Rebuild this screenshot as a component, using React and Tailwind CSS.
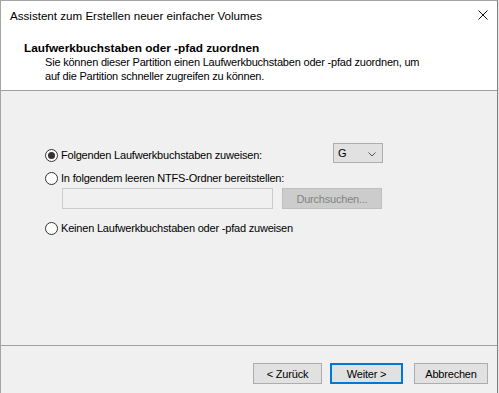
import React from "react";

function Radio({ checked, className = "" }) {
  return (
    <div className={"w-[13px] h-[13px] rounded-full border border-[#333333] bg-white flex items-center justify-center shrink-0 " + className}>
      {checked && <div className="w-[7px] h-[7px] rounded-full bg-[#333333]" />}
    </div>
  );
}

function Btn({ children, className = "", def = false }) {
  return (
    <div
      className={
        "h-[21px] flex items-center justify-center bg-[#e1e1e1] " +
        (def ? "border-2 border-[#0078d7] " : "border border-[#adadad] ") +
        className
      }
    >
      {children}
    </div>
  );
}

export default function App() {
  return (
    <div className="w-[499px] h-[393px] flex bg-white text-black text-[11px] tracking-[-0.2px] leading-[14px] font-['Liberation_Sans',Arial,sans-serif] overflow-hidden">
      <div className="w-[498px] h-[393px] flex flex-col border-l border-t border-[#a5a5a5] border-r border-r-[#808080]">
        {/* title bar */}
        <div className="h-[30px] flex items-start justify-between pl-[9px] pt-[8px] bg-white shrink-0">
          <span className="text-[11.6px] tracking-normal">Assistent zum Erstellen neuer einfacher Volumes</span>
          <svg width="10" height="10" viewBox="0 0 10 10" className="mt-[1px] mr-[9px]">
            <path d="M0.5 0.5 L9.5 9.5 M9.5 0.5 L0.5 9.5" stroke="#111" strokeWidth="1" fill="none" />
          </svg>
        </div>
        {/* header */}
        <div className="h-[59px] bg-white pl-[23px] pt-[10px] shrink-0">
          <div className="font-bold text-[11.8px] tracking-normal">Laufwerkbuchstaben oder -pfad zuordnen</div>
          <div className="pl-[21px]">
            <div>Sie können dieser Partition einen Laufwerkbuchstaben oder -pfad zuordnen, um</div>
            <div>auf die Partition schneller zugreifen zu können.</div>
          </div>
        </div>
        <div className="h-px bg-[#a0a0a0] shrink-0" />
        {/* body */}
        <div className="flex-1 bg-[#f0f0f0] pt-[52px] pl-[44px] flex flex-col">
          <div className="h-[20px] flex items-start">
            <div className="flex items-center mt-[5px] w-[288px]">
              <Radio checked />
              <span className="ml-[3px]">Folgenden Laufwerkbuchstaben zuweisen:</span>
            </div>
            <div className="w-[50px] h-[20px] bg-[#e1e1e1] border border-[#adadad] flex items-center justify-between pl-[4px] pr-[6px]">
              <span>G</span>
              <svg width="8" height="5" viewBox="0 0 8 5" className="mt-[2px]">
                <path d="M0.5 0.5 L4 4 L7.5 0.5" stroke="#555" strokeWidth="1" fill="none" />
              </svg>
            </div>
          </div>
          <div className="h-[16px] flex items-center mt-[7px]">
            <Radio />
            <span className="ml-[3px]">In folgendem leeren NTFS-Ordner bereitstellen:</span>
          </div>
          <div className="flex mt-[2px] ml-[17px]">
            <div className="w-[211px] h-[21px] border border-[#cccccc] bg-[#f0f0f0]" />
            <div className="ml-[9px] w-[100px] h-[21px] border border-[#bfbfbf] bg-[#cccccc] text-[#838383] flex items-center justify-center">
              Durchsuchen...
            </div>
          </div>
          <div className="h-[16px] flex items-center mt-[11px]">
            <Radio />
            <span className="ml-[3px]">Keinen Laufwerkbuchstaben oder -pfad zuweisen</span>
          </div>
        </div>
        <div className="h-px bg-[#a0a0a0] shrink-0" />
        {/* buttons */}
        <div className="h-[47px] bg-[#f0f0f0] flex justify-end items-start pt-[17px] pr-[9px] shrink-0">
          <Btn className="w-[69px]">&lt; Zurück</Btn>
          <Btn def className="w-[73px] ml-[8px]">Weiter &gt;</Btn>
          <Btn className="w-[74px] ml-[11px]">Abbrechen</Btn>
        </div>
      </div>
      <div className="w-px h-[393px] bg-[#e6e6e6]" />
    </div>
  );
}
